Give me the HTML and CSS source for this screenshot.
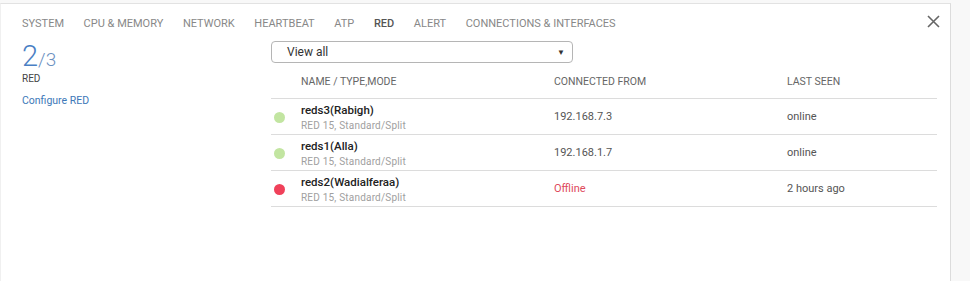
FILE: index.html
```html
<!DOCTYPE html>
<html>
<head>
<meta charset="utf-8">
<link rel="stylesheet" href="styles.css">
</head>
<body>
<div class="panel">
  <nav class="tabs">
    <span class="tab">SYSTEM</span>
    <span class="tab">CPU &amp; MEMORY</span>
    <span class="tab">NETWORK</span>
    <span class="tab">HEARTBEAT</span>
    <span class="tab">ATP</span>
    <span class="tab active">RED</span>
    <span class="tab">ALERT</span>
    <span class="tab">CONNECTIONS &amp; INTERFACES</span>
  </nav>
  <button class="close" aria-label="Close">
    <svg width="13" height="13" viewBox="0 0 13 13"><path d="M1 1L12 12M12 1L1 12" stroke="#666" stroke-width="1.6" fill="none"/></svg>
  </button>
  <div class="content">
    <aside class="summary">
      <div class="count"><span class="big">2</span><span class="small">/3</span></div>
      <div class="label">RED</div>
      <a class="link" href="#">Configure RED</a>
    </aside>
    <section class="main">
      <div class="select"><span>View all</span><span class="arrow">&#9660;</span></div>
      <div class="table">
        <div class="row head">
          <div class="c-dot"></div>
          <div class="c-name">NAME / TYPE,MODE</div>
          <div class="c-from">CONNECTED FROM</div>
          <div class="c-seen">LAST SEEN</div>
        </div>
        <div class="row">
          <div class="c-dot"><span class="dot ok"></span></div>
          <div class="c-name"><div class="name">reds3(Rabigh)</div><div class="sub">RED 15, Standard/Split</div></div>
          <div class="c-from">192.168.7.3</div>
          <div class="c-seen">online</div>
        </div>
        <div class="row">
          <div class="c-dot"><span class="dot ok"></span></div>
          <div class="c-name"><div class="name">reds1(Alla)</div><div class="sub">RED 15, Standard/Split</div></div>
          <div class="c-from">192.168.1.7</div>
          <div class="c-seen">online</div>
        </div>
        <div class="row">
          <div class="c-dot"><span class="dot bad"></span></div>
          <div class="c-name"><div class="name">reds2(Wadialferaa)</div><div class="sub">RED 15, Standard/Split</div></div>
          <div class="c-from off">Offline</div>
          <div class="c-seen">2 hours ago</div>
        </div>
      </div>
    </section>
  </div>
</div>
</body>
</html>
```
FILE: styles.css
```css
* { box-sizing: border-box; }
html, body { margin: 0; padding: 0; }
body {
  background: #f8f8f8;
  font-family: Roboto, "Liberation Sans", sans-serif;
  color: #333;
  height: 281px;
  overflow: hidden;
}
.panel {
  position: relative;
  width: 951px;
  height: 280px;
  margin-top: 3px;
  background: #fff;
  border-top: 1px solid #e2e2e2;
  border-right: 1px solid #dcdcdc;
  border-left: 1px solid #f0f0f0;
}
.tabs {
  display: flex;
  gap: 19.6px;
  padding: 13px 0 0 21px;
  height: 34px;
  font-size: 11px;
  color: #888;
}
.tab.active { color: #555; font-weight: 500; }
.close {
  position: absolute;
  top: 11px;
  right: 10px;
  border: 0;
  background: none;
  padding: 0;
  width: 13px;
  height: 13px;
}
.content {
  display: flex;
}
.summary {
  width: 270px;
  padding-left: 21px;
  padding-top: 4px;
}
.count { line-height: 1; color: #4a7fc4; }
.count .big { font-size: 29px; font-weight: 300; }
.count .small { font-size: 19px; font-weight: 300; color: #6b8fbf; }
.label { font-size: 10px; color: #444; margin-top: 2px; }
.link {
  display: block;
  margin-top: 10px;
  font-size: 10.5px;
  color: #3d78b8;
  text-decoration: none;
}
.main { width: 666px; padding-top: 3px; }
.select {
  width: 302px;
  height: 22px;
  border: 1px solid #b5b5b5;
  border-radius: 4px;
  display: flex;
  align-items: center;
  justify-content: space-between;
  padding: 0 7px 0 15px;
  font-size: 12px;
  color: #333;
}
.select .arrow { font-size: 8px; color: #333; }
.row {
  display: flex;
  align-items: center;
  height: 36px;
  border-bottom: 1px solid #dcdcdc;
  font-size: 11px;
  color: #555;
}
.row.head {
  padding-top: 1px;
  font-size: 10.5px;
  color: #666;
}
.c-dot { width: 30px; padding-left: 3px; display: flex; }
.c-name { width: 253px; }
.c-from { width: 233px; }
.c-seen { flex: 1; }
.dot { width: 11px; height: 11px; border-radius: 50%; display: block; margin-top: 2px; }
.dot.ok { background: #c2e5a1; }
.dot.bad { background: #f0415a; }
.name { font-size: 11.5px; color: #222; font-weight: 500; }
.sub { font-size: 10px; letter-spacing: 0.2px; color: #a0a0a0; margin-top: 3px; }
.off { color: #de4a5c; }
```
